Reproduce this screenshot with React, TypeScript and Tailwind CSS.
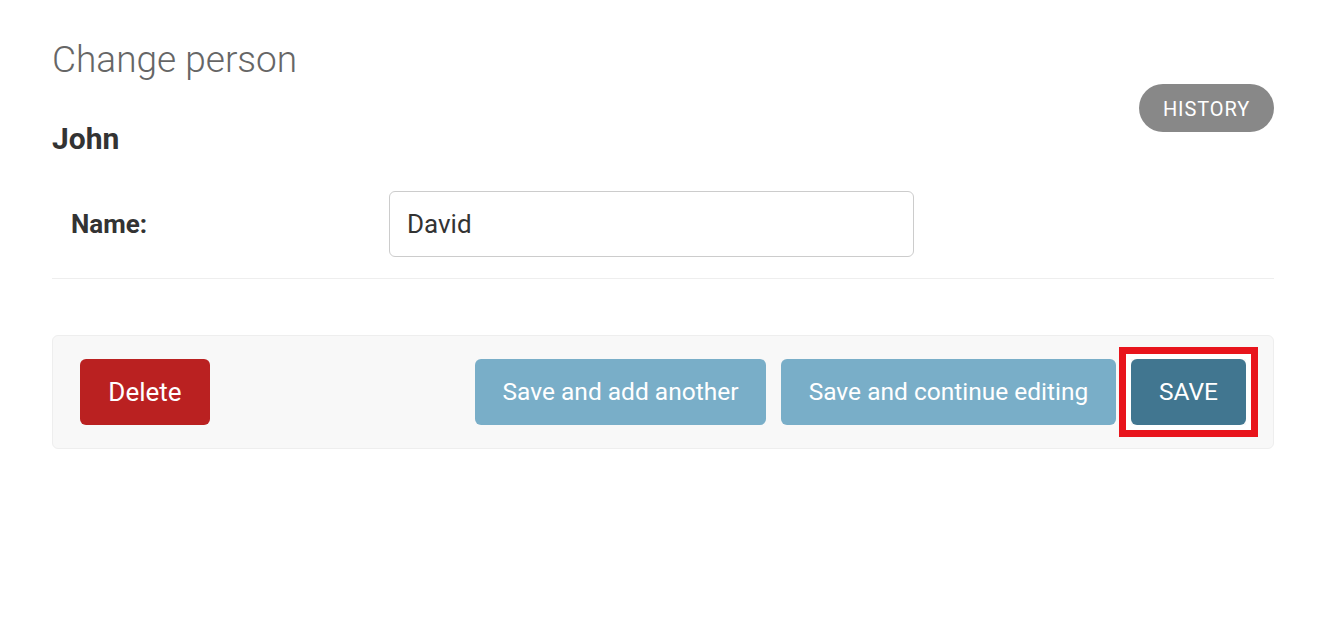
export default function App() {
  return (
    <div className="min-h-screen bg-white pl-[52px] pr-[55px] pt-[38px] font-['Roboto',sans-serif] text-[#333]">
      {/* Header */}
      <h1 className="text-[37px] font-light leading-[44px] text-[#666]">Change person</h1>
      <div className="mt-[2px] flex items-start justify-between">
        <h2 className="mt-[37px] text-[30px] font-bold leading-[36px] text-[#333]">John</h2>
        <a className="flex h-[48px] w-[135px] items-center justify-center rounded-full bg-[#888] pt-[1px] text-[20px] tracking-[0.9px] text-white uppercase">
          History
        </a>
      </div>

      {/* Form */}
      <div className="mt-[13px] flex items-center border-b border-[#eee] py-[21px] pl-[19px]">
        <label className="w-[318px] text-[26px] font-bold text-[#333]">Name:</label>
        <input
          type="text"
          defaultValue="David"
          className="h-[66px] w-[525px] rounded-[6px] border border-[#ccc] bg-white px-[17px] text-[26px] text-[#333] outline-none"
        />
      </div>

      {/* Submit row */}
      <div className="mt-[56px] flex items-center justify-between rounded-[6px] border border-[#eee] bg-[#f8f8f8] px-[27px] pt-[23px] pb-[23px]">
        <a className="flex h-[66px] w-[130px] items-center justify-center rounded-[6px] bg-[#ba2121] text-[26px] text-white">
          Delete
        </a>
        <div className="flex gap-[15px]">
          <button className="h-[66px] w-[291px] rounded-[6px] bg-[#79aec8] text-[24.5px] text-white">
            Save and add another
          </button>
          <button className="h-[66px] w-[335px] rounded-[6px] bg-[#79aec8] text-[24.5px] text-white">
            Save and continue editing
          </button>
          <button className="relative h-[66px] w-[115px] rounded-[6px] bg-[#417690] text-[24.5px] text-white">
            SAVE
            <span className="pointer-events-none absolute -inset-[12px] border-[7px] border-[#e8141c] shadow-[inset_0_0_0_5px_#fff]" />
          </button>
        </div>
      </div>
    </div>
  );
}
